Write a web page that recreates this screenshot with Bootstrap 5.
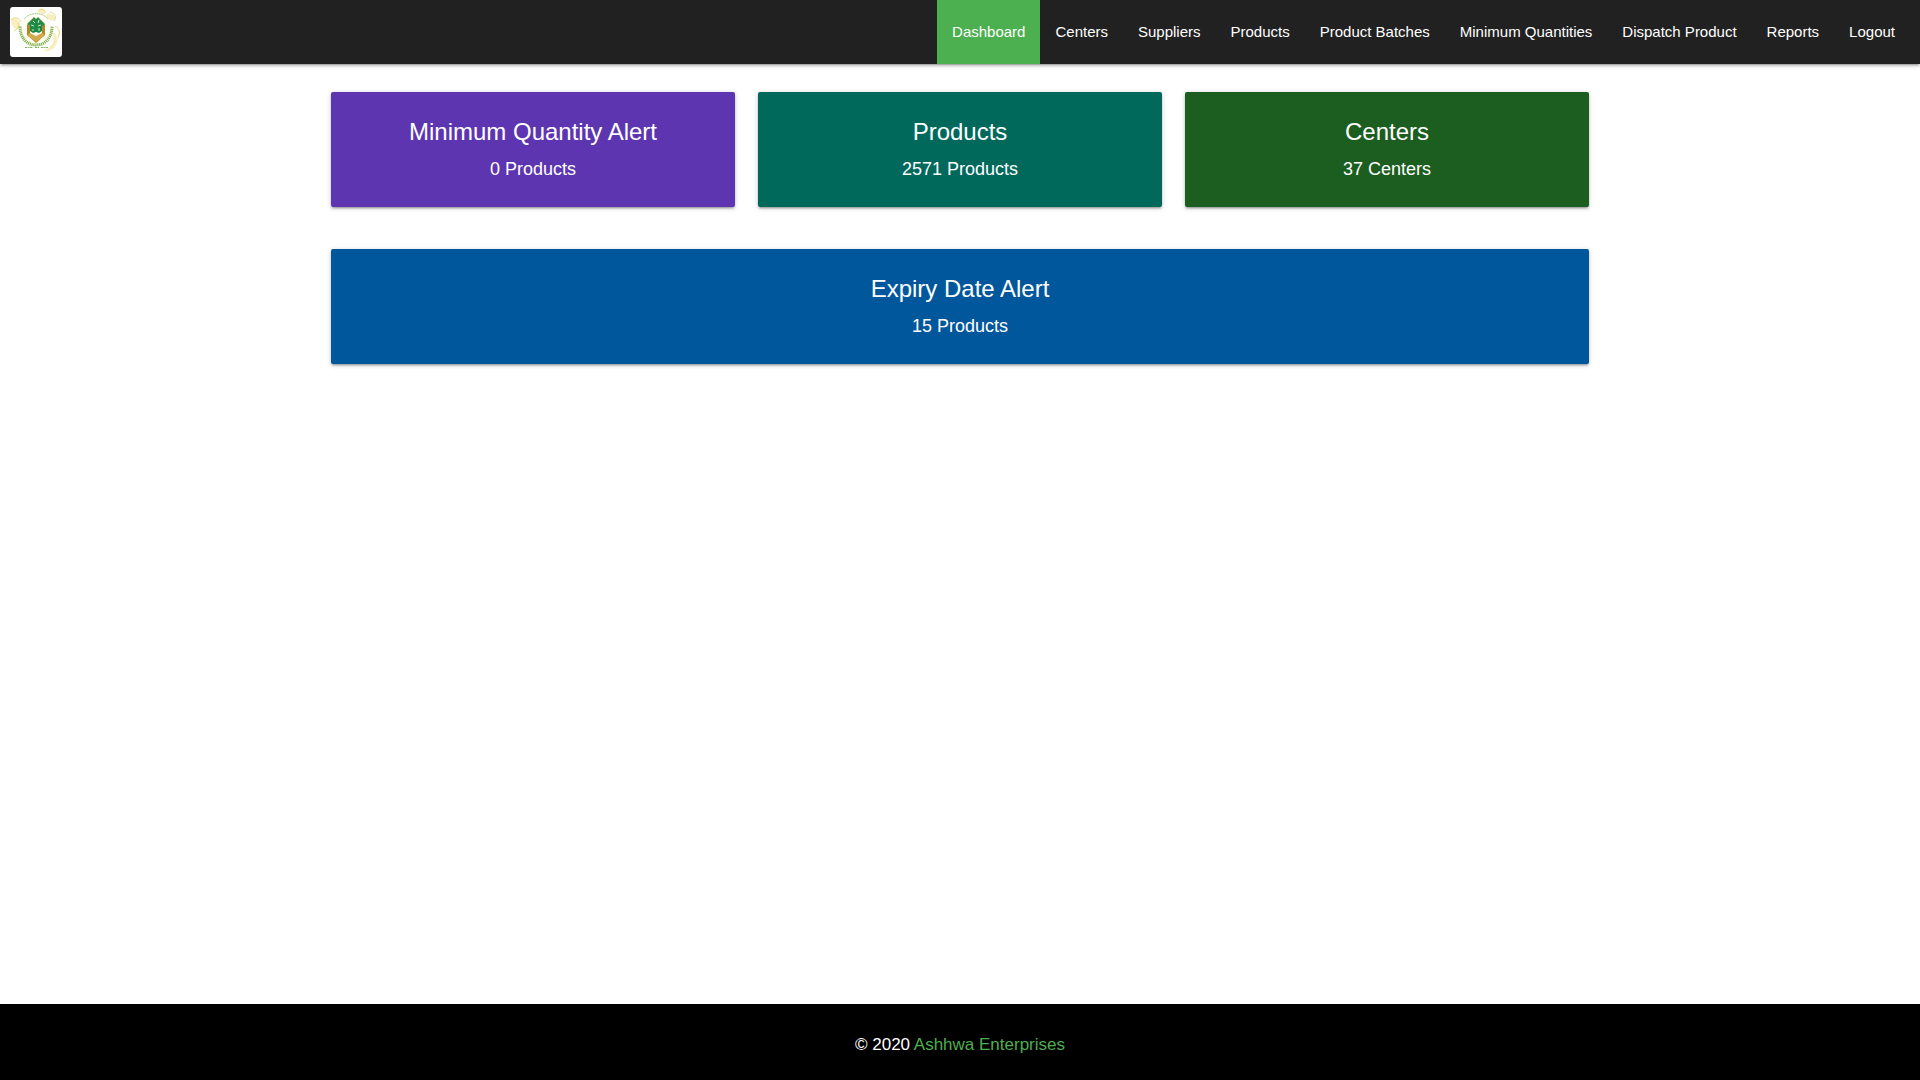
<!DOCTYPE html>
<html lang="en">
<head>
<meta charset="utf-8">
<meta name="viewport" content="width=device-width, initial-scale=1">
<title>Dashboard - Ashhwa Enterprises</title>
<link href="https://cdn.jsdelivr.net/npm/bootstrap@5.3.0/dist/css/bootstrap.min.css" rel="stylesheet">
<style>
  body { font-family: "Liberation Sans", Arial, sans-serif; font-size: 15px; line-height: 24px; color: #212121; background: #fff; }
  .raised { box-shadow: 0 2px 2px 0 rgba(0,0,0,.14), 0 3px 1px -2px rgba(0,0,0,.12), 0 1px 5px 0 rgba(0,0,0,.2); }
  .site-nav { background: #212121; min-height: 64px; padding: 0 10px; }
  .site-nav .navbar-nav { --bs-navbar-nav-link-padding-x: 15px; }
  .site-nav .navbar-nav .nav-link { color: #fff; padding: 20px 15px; line-height: 24px; }
  .site-nav .navbar-nav .nav-link:hover { background: rgba(255,255,255,.1); }
  .site-nav .navbar-nav .nav-link.active { background: #4caf50; }
  .logo-tile { width: 52px; height: 50px; background: #fff; border-radius: 3px; overflow: hidden; }
  .board { max-width: 1258px; padding-top: 28px; }
  .board .row { --bs-gutter-x: 23px; --bs-gutter-y: 42px; }
  .tile { border: 0; border-radius: 2px; color: #fff; padding: 24px; text-align: center; text-decoration: none; }
  .tile h2 { font-size: 24px; line-height: 32px; font-weight: 400; margin: 0 0 8px; }
  .tile p { font-size: 18px; line-height: 27px; margin: 0; }
  .tone-purple { background: #5e35b1; }
  .tone-teal { background: #00695c; }
  .tone-green { background: #1b5e20; }
  .tone-blue { background: #01579b; }
  .site-footer { background: #000; color: #fff; font-size: 17px; padding: 29px 0 23px; }
  .site-footer a { color: #4caf50; }
</style>
<script src="https://cdn.jsdelivr.net/npm/bootstrap@5.3.0/dist/js/bootstrap.bundle.min.js" defer></script>
</head>
<body class="d-flex flex-column min-vh-100">
<nav class="site-nav navbar navbar-expand-lg raised" aria-label="Main">
  <a class="logo-tile d-block" href="#" aria-label="Home">
    <svg class="d-block" width="52" height="50" viewBox="0 0 52 50" fill="none">
      <g fill="#f6e9a6" opacity=".7">
        <path d="M2 12c3-2 7 0 8 4s-1 7-4 6-6-6-4-10zM29 2c3-2 6 0 6 3s-3 3-4 2-4-3-2-5zM37 7c4-1 8 1 8 4s-5 3-7 1-3-4-1-5z"/>
        <path d="M43 25c4 2 6 8 3 13s-8 7-13 6c5-2 9-5 10-9s0-7 0-10z"/>
      </g>
      <path d="M1 13c3-4 9-2 10 2M4 24c3-1 6-5 4-8M28 5c2-4 8-3 7 1M40 5c5 1 7 5 4 9M45 19c5 2 5 8 3 12" stroke="#ead77b"/>
      <circle cx="26" cy="23" r="15" fill="#fffdf1"/>
      <path d="M14 12a16 16 0 0 1 24 0" stroke="#8dbb70" stroke-width="1" stroke-dasharray="1.2 .6"/>
      <path d="M10 19.5C10 31 17 38 26 38s16-7 16-18.500" stroke="#80b14a" stroke-width="3" stroke-dasharray="1.2 .7"/>
      <path d="M17 17l3 2v8l6 5 6-5v-8l3-2v11l-9 8-9-8z" fill="#b2862b"/>
      <path d="M20 26l6 3 6-3 3 2-9 7-9-7z" fill="#d2ab4c"/>
      <path d="M17 17l7-7 2 2 2-2 7 7-2 2-13 0z" fill="#3a8a45"/>
      <path d="M20 15l6-3 6 3v9l-3 2-3-1-3 1-3-2z" fill="#1e8a46"/>
      <path d="M23 14l2 2M29 13l-1 3M21 18l3 1M31 18l-3 1M23 22v2M29 21v3" stroke="#cfe8bc" stroke-width="1"/>
      <path d="M15 40.500h8M25 40.500h4M31 40.500h7" stroke="#83b65c" stroke-width="1" stroke-dasharray="2 .6"/>
    </svg>
  </a>
  <button class="navbar-toggler navbar-dark" type="button" data-bs-toggle="collapse" data-bs-target="#menu" aria-controls="menu" aria-expanded="false" aria-label="Menu"><span class="navbar-toggler-icon"></span></button>
  <div class="collapse navbar-collapse" id="menu">
    <ul class="navbar-nav ms-auto">
      <li class="nav-item"><a class="nav-link active" aria-current="page" href="#">Dashboard</a></li>
      <li class="nav-item"><a class="nav-link" href="#">Centers</a></li>
      <li class="nav-item"><a class="nav-link" href="#">Suppliers</a></li>
      <li class="nav-item"><a class="nav-link" href="#">Products</a></li>
      <li class="nav-item"><a class="nav-link" href="#">Product Batches</a></li>
      <li class="nav-item"><a class="nav-link" href="#">Minimum Quantities</a></li>
      <li class="nav-item"><a class="nav-link" href="#">Dispatch Product</a></li>
      <li class="nav-item"><a class="nav-link" href="#">Reports</a></li>
      <li class="nav-item"><a class="nav-link" href="#">Logout</a></li>
    </ul>
  </div>
</nav>
<main class="board container-fluid px-0 flex-grow-1">
  <div class="row">
    <div class="col-12 col-md-4"><a class="card tile tone-purple raised" href="#"><h2>Minimum Quantity Alert</h2><p>0 Products</p></a></div>
    <div class="col-12 col-md-4"><a class="card tile tone-teal raised" href="#"><h2>Products</h2><p>2571 Products</p></a></div>
    <div class="col-12 col-md-4"><a class="card tile tone-green raised" href="#"><h2>Centers</h2><p>37 Centers</p></a></div>
    <div class="col-12"><a class="card tile tone-blue raised" href="#"><h2>Expiry Date Alert</h2><p>15 Products</p></a></div>
  </div>
</main>
<footer class="site-footer text-center">© 2020 <a class="text-decoration-none" href="#">Ashhwa Enterprises</a></footer>
</body>
</html>
